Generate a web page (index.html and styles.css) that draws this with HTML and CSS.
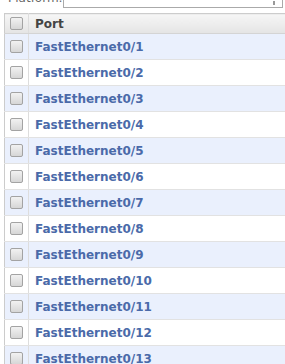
FILE: index.html
```html
<!DOCTYPE html>
<html>
	<head>
		<meta charset="UTF-8">
		<title>Ports</title>
		<link rel="stylesheet" href="styles.css">
	</head>
	<body>
		<div class="filter">
			<label class="filter-label">Platform:</label>
			<div class="filter-box"><span class="filter-arrow"></span></div>
		</div>
		<table class="grid">
			<thead>
				<tr>
					<th class="check"><span class="box"></span></th>
					<th class="name">Port</th>
				</tr>
			</thead>
			<tbody>
				<tr class="odd"><td class="check"><span class="box"></span></td><td class="name"><a href="#">FastEthernet0/1</a></td></tr>
				<tr><td class="check"><span class="box"></span></td><td class="name"><a href="#">FastEthernet0/2</a></td></tr>
				<tr class="odd"><td class="check"><span class="box"></span></td><td class="name"><a href="#">FastEthernet0/3</a></td></tr>
				<tr><td class="check"><span class="box"></span></td><td class="name"><a href="#">FastEthernet0/4</a></td></tr>
				<tr class="odd"><td class="check"><span class="box"></span></td><td class="name"><a href="#">FastEthernet0/5</a></td></tr>
				<tr><td class="check"><span class="box"></span></td><td class="name"><a href="#">FastEthernet0/6</a></td></tr>
				<tr class="odd"><td class="check"><span class="box"></span></td><td class="name"><a href="#">FastEthernet0/7</a></td></tr>
				<tr><td class="check"><span class="box"></span></td><td class="name"><a href="#">FastEthernet0/8</a></td></tr>
				<tr class="odd"><td class="check"><span class="box"></span></td><td class="name"><a href="#">FastEthernet0/9</a></td></tr>
				<tr><td class="check"><span class="box"></span></td><td class="name"><a href="#">FastEthernet0/10</a></td></tr>
				<tr class="odd"><td class="check"><span class="box"></span></td><td class="name"><a href="#">FastEthernet0/11</a></td></tr>
				<tr><td class="check"><span class="box"></span></td><td class="name"><a href="#">FastEthernet0/12</a></td></tr>
				<tr class="odd"><td class="check"><span class="box"></span></td><td class="name"><a href="#">FastEthernet0/13</a></td></tr>
			</tbody>
		</table>
	</body>
</html>
```

FILE: styles.css
```css
*{
	margin:0;
	padding:0;
	box-sizing:border-box;
}
body{
	font-family:"DejaVu Sans",Verdana,sans-serif;
	font-size:12px;
	color:#333;
	background:#fff;
	overflow:hidden;
}
.filter{
	display:flex;
	align-items:flex-end;
	height:21px;
	margin-top:-13px;
	padding-left:8px;
}
.filter-label{
	width:55px;
	font-size:12px;
	line-height:12px;
	padding-bottom:4px;
	color:#666;
}
.filter-box{
	flex:1;
	height:21px;
	margin-right:2px;
	border:1px solid #aaa;
	background:#fff;
	position:relative;
}
.filter-arrow{
	position:absolute;
	right:7px;
	top:13px;
	width:2px;
	height:4px;
	background:#999;
}
.grid{
	margin:5px 0 0 4px;
	width:281px;
	border-collapse:collapse;
	border-left:1px solid #ccc;
	border-top:1px solid #ccc;
}
.grid th{
	height:20px;
	background:linear-gradient(#f6f6f6,#e4e4e4);
	border-bottom:1px solid #d4d4d4;
	text-align:left;
	font-weight:bold;
	color:#444;
}
.grid td{
	height:26px;
	border-bottom:1px solid #e2e2e2;
}
.grid tr.odd td{
	background:#eaf0fd;
}
.grid .check{
	width:24px;
	padding-left:5px;
	border-right:1px solid #ddd;
}
.grid .name{
	padding-left:6px;
}
.box{
	display:block;
	width:13px;
	height:13px;
	border:1px solid #a3a3a3;
	border-radius:2px;
	background:linear-gradient(#f2f2f2,#d6d6d6);
}
.grid a{
	color:#4a6aa9;
	font-weight:bold;
	text-decoration:none;
	font-size:12px;
}
```
